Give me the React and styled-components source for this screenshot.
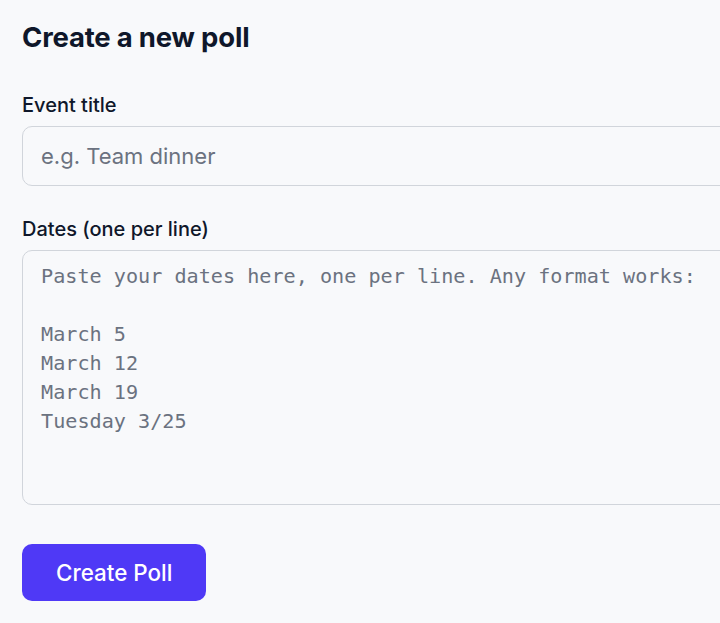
import React from "react";
import styled, { createGlobalStyle } from "styled-components";

const GlobalStyle = createGlobalStyle`
  html, body {
    margin: 0;
    padding: 0;
    background: #f8f9fb;
    overflow: hidden;
  }
  body {
    font-family: Inter, "Noto Sans", Arial, sans-serif;
    color: #0f172a;
  }
`;

const Page = styled.main`
  width: 920px;
  padding: 17px 22px 24px;
  box-sizing: border-box;
`;

const Title = styled.h1`
  margin: 0 0 35px;
  font-size: 27.5px;
  line-height: 40px;
  font-weight: 700;
  letter-spacing: -0.2px;
  color: #0f172a;
`;

const Form = styled.form`
  display: flex;
  flex-direction: column;
  align-items: flex-start;
`;

const Field = styled.div`
  display: flex;
  flex-direction: column;
  gap: 8px;
  width: 100%;
  margin-bottom: ${({ $gap }) => $gap || 30}px;
`;

const Label = styled.label`
  font-size: 20px;
  line-height: 26px;
  font-weight: 500;
  color: #0f172a;
`;

const TextInput = styled.input`
  box-sizing: border-box;
  width: 100%;
  height: 60px;
  padding: 0 18px;
  border: 1.5px solid #d1d5db;
  border-radius: 10px;
  background: #f8f9fb;
  font-family: Inter, "Noto Sans", Arial, sans-serif;
  font-size: 22px;
  color: #0f172a;
  outline: none;

  &::placeholder {
    color: #6b7280;
  }
`;

const TextArea = styled.textarea`
  box-sizing: border-box;
  width: 100%;
  height: 255px;
  padding: 11px 18px;
  border: 1.5px solid #d1d5db;
  border-radius: 10px;
  background: #f8f9fb;
  font-family: "DejaVu Sans Mono", "Liberation Mono", monospace;
  font-size: 20.15px;
  line-height: 29px;
  color: #0f172a;
  resize: none;
  outline: none;

  &::placeholder {
    color: #6b7280;
  }
`;

const SubmitButton = styled.button`
  height: 57px;
  padding: 0 34px;
  border: none;
  border-radius: 10px;
  background: #4f39f6;
  color: #fff;
  font-family: Inter, "Noto Sans", Arial, sans-serif;
  font-size: 22.4px;
  font-weight: 500;
  cursor: pointer;
`;

const datesPlaceholder =
  "Paste your dates here, one per line. Any format works:\n\nMarch 5\nMarch 12\nMarch 19\nTuesday 3/25";

export default function App() {
  return (
    <>
      <GlobalStyle />
      <Page>
        <Title>Create a new poll</Title>
        <Form onSubmit={(e) => e.preventDefault()}>
          <Field>
            <Label htmlFor="title">Event title</Label>
            <TextInput id="title" placeholder="e.g. Team dinner" />
          </Field>
          <Field $gap={39}>
            <Label htmlFor="dates">Dates (one per line)</Label>
            <TextArea id="dates" placeholder={datesPlaceholder} />
          </Field>
          <SubmitButton type="submit">Create Poll</SubmitButton>
        </Form>
      </Page>
    </>
  );
}
